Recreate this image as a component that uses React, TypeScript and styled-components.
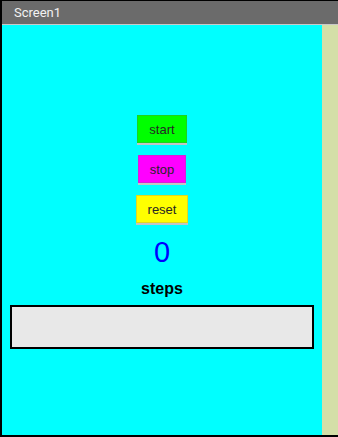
import React from 'react';
import styled, {createGlobalStyle} from 'styled-components';

const GlobalStyle = createGlobalStyle`
  html, body {
    margin: 0;
    padding: 0;
  }
  body {
    font-family: "Liberation Sans", Arial, sans-serif;
  }
`;

const Frame = styled.div`
  box-sizing: border-box;
  width: 338px;
  height: 437px;
  display: flex;
  flex-direction: column;
  border-top: 1px solid #000;
  border-left: 2px solid #000;
  border-bottom: 2px solid #000;
  background: #00ffff;
`;

const TitleBar = styled.div`
  height: 23px;
  line-height: 23px;
  padding-left: 12px;
  background: #6b6b6b;
  border-bottom: 1px solid #c8c8c8;
  color: #f2f2f2;
  font-family: Roboto, "Liberation Sans", sans-serif;
  font-size: 13px;
`;

const Body = styled.div`
  flex: 1;
  display: flex;
`;

const Screen = styled.div`
  flex: 1;
  display: flex;
  flex-direction: column;
  align-items: center;
  padding-top: 90px;
  background: #00ffff;
`;

const SideStrip = styled.div`
  width: 16px;
  background: #d4dfa8;
`;

const ButtonStack = styled.div`
  display: flex;
  flex-direction: column;
  align-items: center;
  gap: 12px;
`;

const ActionButton = styled.button<{$bg: string; $edge: string}>`
  box-sizing: border-box;
  height: 28px;
  padding: 0 11px;
  margin: 0;
  background: ${p => p.$bg};
  border: 1px solid ${p => p.$edge};
  box-shadow: 0 2px 0 #c4c4c4;
  color: #262626;
  font-family: "Liberation Sans", Arial, sans-serif;
  font-size: 13px;
  cursor: pointer;
`;

const Counter = styled.div`
  margin-top: 13px;
  font-size: 29px;
  line-height: 33px;
  color: #0000ff;
`;

const Label = styled.div`
  margin-top: 11px;
  font-size: 16px;
  font-weight: bold;
  line-height: 18px;
  color: #000;
`;

const TextBox = styled.div`
  box-sizing: border-box;
  align-self: stretch;
  height: 44px;
  margin: 7px 8px 0;
  border: 2px solid #000;
  background: #e8e8e8;
`;

const buttons = [
  {label: 'start', bg: '#00ff00', edge: '#1fd11f'},
  {label: 'stop', bg: '#ff00ff', edge: '#d81fd8'},
  {label: 'reset', bg: '#ffff00', edge: '#e0d81f'},
];

export default function App() {
  const [steps] = React.useState(0);

  return (
    <>
      <GlobalStyle/>
      <Frame>
        <TitleBar>Screen1</TitleBar>
        <Body>
          <Screen>
            <ButtonStack>
              {buttons.map(b => (
                <ActionButton key={b.label} $bg={b.bg} $edge={b.edge}>{b.label}</ActionButton>
              ))}
            </ButtonStack>
            <Counter>{steps}</Counter>
            <Label>steps</Label>
            <TextBox/>
          </Screen>
          <SideStrip/>
        </Body>
      </Frame>
    </>
  );
}
